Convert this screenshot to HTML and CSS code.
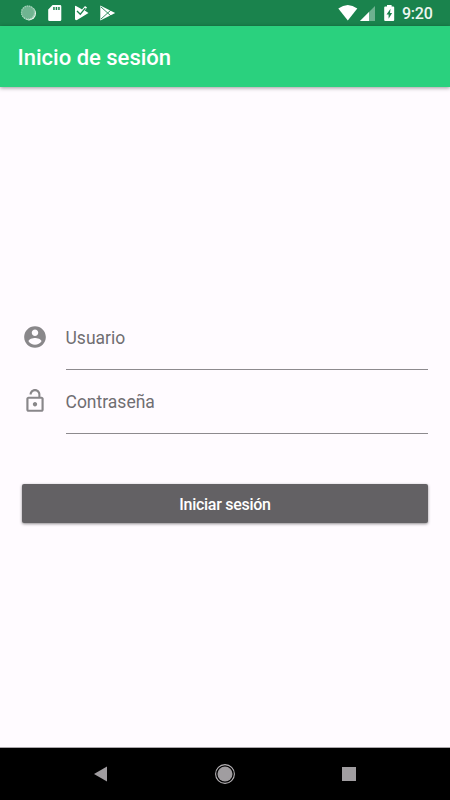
FILE: index.html
```html
<!DOCTYPE html>
<html lang="es">
<head>
<meta charset="utf-8">
<title>Inicio de sesión</title>
<link rel="stylesheet" href="styles.css">
</head>
<body>
<div class="screen">
  <div class="status">
    <svg class="notifications" viewBox="0 0 130 26">
      <circle cx="29" cy="13.4" r="7" fill="#e9f5ee"/>
      <circle cx="28" cy="12.6" r="7" fill="#70b491"/>
      <circle cx="28" cy="12.6" r="6.5" fill="none" stroke="#a4d2b9" stroke-width="1.3" stroke-dasharray="1.2 1"/>
      <path fill="#fff" fill-rule="evenodd" d="M52.6 5H60q1.300 0 1.300 1.300v13.400q0 1.300-1.300 1.300H49.500q-1.300 0-1.300-1.300V9.500zM53.200 7v3h1.500V7zM55.700 7v3h1.500V7zM58.200 7v3h1.500V7z"/>
      <path fill="#fff" d="M75 6.200Q75 5.500 76 6l4.500 2.400L82 9.500 85 6l2 1.600-2.300 3L88.500 13 77 20q-2 .6-2-1z"/>
      <path fill="none" stroke="#1a834d" stroke-width="1.300" d="M77 11l3.300 3.200 5-6"/>
      <path fill="#fff" d="M100.300 5.500l14.900 7.500-14.900 7.500z"/>
      <path fill="none" stroke="#1a834d" stroke-width=".9" d="M101 7l9.800 8.800M101 19l9.800-8.800"/>
    </svg>
    <div class="system">
      <svg class="signals" viewBox="0 0 60 26">
        <path fill="#fff" d="M.300 8.600Q9.800 1.200 19.300 8.600L9.800 20.500z"/>
        <path fill="#6db18f" d="M22 21L37 6v15z"/>
        <path fill="#fff" d="M22 21l9-9v9z"/>
        <path fill="#fff" d="M49 5h4.600v1.600h1.600q1 0 1 1V20q0 1-1 1h-8q-1 0-1-1V7.600q0-1 1-1H49z"/>
        <path fill="#1a834d" d="M52.500 8.800l-4 5.700h2.100v4.300l3.500-5.900H52z"/>
      </svg>
      <span class="clock">9:20</span>
    </div>
  </div>
  <header class="appbar">Inicio de sesión</header>
  <main class="form">
    <div class="field">
      <svg class="field-icon" viewBox="0 0 24 24"><path d="M12 2C6.480 2 2 6.480 2 12s4.480 10 10 10 10-4.480 10-10S17.520 2 12 2zm0 3c1.660 0 3 1.340 3 3s-1.340 3-3 3-3-1.340-3-3 1.340-3 3-3zm0 14.200c-2.500 0-4.710-1.280-6-3.220.03-1.990 4-3.080 6-3.080 1.990 0 5.970 1.090 6 3.080-1.290 1.940-3.500 3.220-6 3.220z"/></svg>
      <div class="input">Usuario</div>
    </div>
    <div class="field">
      <svg class="field-icon" viewBox="0 0 24 24"><path d="M12 17c1.100 0 2-.9 2-2s-.9-2-2-2-2 .9-2 2 .9 2 2 2zm6-9h-1V6c0-2.760-2.240-5-5-5S7 3.240 7 6h1.900c0-1.710 1.390-3.100 3.100-3.100 1.710 0 3.100 1.390 3.100 3.100v2H6c-1.100 0-2 .9-2 2v10c0 1.100.9 2 2 2h12c1.100 0 2-.9 2-2V10c0-1.100-.9-2-2-2zm0 12H6V10h12v10z"/></svg>
      <div class="input">Contraseña</div>
    </div>
    <div class="button">Iniciar sesión</div>
  </main>
  <nav class="navbar">
    <svg viewBox="0 0 24 24"><path d="M5 12L18 4.500v15z"/></svg>
    <svg viewBox="0 0 24 24"><circle cx="12" cy="12" r="7.500"/><circle class="ring" cx="12" cy="12" r="9.400"/></svg>
    <svg viewBox="0 0 24 24"><path d="M5 5h14v14H5z"/></svg>
  </nav>
</div>
</body>
</html>
```

FILE: styles.css
```css
* { box-sizing: border-box; }
body { margin: 0; font-family: Roboto, "Liberation Sans", sans-serif; }
.screen {
  width: 450px;
  height: 800px;
  display: flex;
  flex-direction: column;
  background: #fffbff;
  overflow: hidden;
}
.status {
  height: 26px;
  flex: none;
  display: flex;
  justify-content: space-between;
  background: #1a834d;
}
.notifications { width: 130px; height: 26px; }
.system { display: flex; width: 112px; }
.signals { width: 60px; height: 26px; flex: none; }
.clock {
  margin-left: 4px;
  font-size: 16px;
  letter-spacing: -.250px;
  font-weight: 500;
  line-height: 28px;
  color: #edf6f1;
}
.appbar {
  height: 61px;
  flex: none;
  padding: 1px 17.500px 0;
  line-height: 61px;
  font-size: 22px;
  font-weight: 500;
  color: #fff;
  background: #2ad17e;
  box-shadow: 0 1px 4px rgba(0, 0, 0, .4);
}
.form {
  flex: 1;
  padding: 218px 22px 0;
}
.field {
  height: 64px;
  display: flex;
  gap: 17.500px;
}
.field-icon {
  width: 26px;
  height: 26px;
  margin-top: 19.400px;
  fill: #89878a;
}
.input {
  flex: 1;
  height: 65px;
  border-bottom: 1px solid #8d8a8e;
  line-height: 66px;
  font-size: 17.500px;
  color: #706e72;
}
.button {
  height: 39px;
  margin-top: 51.400px;
  border-radius: 2px;
  line-height: 41px;
  text-align: center;
  font-size: 16px;
  letter-spacing: -.280px;
  font-weight: 500;
  color: #fff;
  background: #636164;
  box-shadow: 0 1px 3px rgba(0, 0, 0, .45);
}
.navbar {
  height: 53px;
  flex: none;
  padding: 0 89px;
  display: flex;
  align-items: center;
  justify-content: space-between;
  background: #000;
  border-top: 1px solid #aaa6aa;
}
.navbar svg { width: 24px; height: 24px; fill: #a09da0; }
.navbar .ring { fill: none; stroke: #b5b2b5; stroke-width: 1.100; }
```
